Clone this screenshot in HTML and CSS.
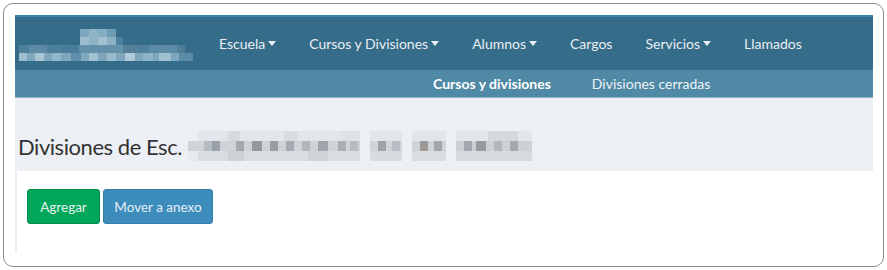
FILE: index.html
```html
<!DOCTYPE html>
<html lang="es">
<head>
<meta charset="utf-8">
<title>Divisiones</title>
<link rel="stylesheet" href="styles.css">
</head>
<body>
<div class="frame">
  <div class="page">
    <header class="topbar">
      <div class="logo">
        <svg width="178" height="36" viewBox="0 0 178 36" aria-hidden="true">
          <g>
            <rect x="61" y="3" width="9" height="8" fill="#7ea6bc"/>
            <rect x="70" y="3" width="9" height="8" fill="#8eb3c7"/>
            <rect x="79" y="3" width="9" height="8" fill="#86adc2"/>
            <rect x="88" y="3" width="9" height="8" fill="#6f9bb4"/>
            <rect x="61" y="11" width="9" height="8" fill="#9dbdce"/>
            <rect x="70" y="11" width="9" height="8" fill="#8fb3c6"/>
            <rect x="79" y="11" width="9" height="8" fill="#a3c1d1"/>
            <rect x="88" y="11" width="9" height="8" fill="#8cb1c5"/>
            <rect x="97" y="11" width="7" height="8" fill="#4c7f9b"/>
          </g>
          <g>
            <rect x="0" y="19" width="166" height="8" fill="#4d7f9b"/>
            <rect x="10" y="19" width="18" height="8" fill="#5a8aa4"/>
            <rect x="42" y="19" width="18" height="8" fill="#4a7d99"/>
            <rect x="60" y="19" width="44" height="8" fill="#6391aa"/>
            <rect x="104" y="19" width="16" height="8" fill="#547f99"/>
            <rect x="130" y="19" width="28" height="8" fill="#5b8ba5"/>
          </g>
          <g>
            <rect x="0" y="27" width="174" height="8" fill="#7ea7be"/>
            <rect x="0" y="27" width="8" height="8" fill="#9ebed0"/>
            <rect x="16" y="27" width="9" height="8" fill="#a9c6d5"/>
            <rect x="33" y="27" width="9" height="8" fill="#92b6c9"/>
            <rect x="52" y="27" width="10" height="8" fill="#5f8ea8"/>
            <rect x="70" y="27" width="9" height="8" fill="#a4c2d2"/>
            <rect x="88" y="27" width="9" height="8" fill="#9abccd"/>
            <rect x="106" y="27" width="10" height="8" fill="#aecad8"/>
            <rect x="124" y="27" width="10" height="8" fill="#8fb4c7"/>
            <rect x="140" y="27" width="12" height="8" fill="#a0c0d0"/>
            <rect x="160" y="27" width="14" height="8" fill="#5a8ca6"/>
          </g>
        </svg>
      </div>
      <nav class="mainnav">
        <a class="navlink">Escuela<span class="caret"></span></a>
        <a class="navlink">Cursos y Divisiones<span class="caret"></span></a>
        <a class="navlink">Alumnos<span class="caret"></span></a>
        <a class="navlink">Cargos</a>
        <a class="navlink">Servicios<span class="caret"></span></a>
        <a class="navlink">Llamados</a>
      </nav>
    </header>
    <div class="subnav">
      <a class="sublink active">Cursos y divisiones</a>
      <a class="sublink">Divisiones cerradas</a>
    </div>
    <section class="content">
      <h1 class="title">Divisiones de Esc.<svg class="blur" width="344" height="30" viewBox="0 0 344 30" aria-hidden="true">
          <rect x="0" y="0" width="172" height="30" fill="#e2e5e9"/>
          <rect x="182" y="0" width="32" height="30" fill="#e2e5e9"/>
          <rect x="224" y="0" width="34" height="30" fill="#e2e5e9"/>
          <rect x="268" y="0" width="76" height="30" fill="#e2e5e9"/>
          <rect x="0" y="0" width="10" height="10" fill="#ecf0f5"/>
          <rect x="40" y="0" width="12" height="10" fill="#d7dade"/>
          <rect x="96" y="0" width="14" height="10" fill="#d9dce0"/>
          <rect x="152" y="0" width="20" height="10" fill="#dfe2e6"/>
          <rect x="300" y="0" width="30" height="10" fill="#d5d8dc"/>
          <rect x="0" y="10" width="172" height="10" fill="#cfd3d8"/>
          <rect x="182" y="10" width="32" height="10" fill="#d0d4d9"/>
          <rect x="224" y="10" width="34" height="10" fill="#cfd3d8"/>
          <rect x="268" y="10" width="76" height="10" fill="#cdd1d6"/>
          <rect x="16" y="10" width="8" height="10" fill="#b6bbc2"/>
          <rect x="24" y="10" width="8" height="10" fill="#98a0aa"/>
          <rect x="48" y="10" width="8" height="10" fill="#a5a9af"/>
          <rect x="64" y="10" width="10" height="10" fill="#94989e"/>
          <rect x="82" y="10" width="8" height="10" fill="#9a9ea4"/>
          <rect x="98" y="10" width="8" height="10" fill="#a6abb3"/>
          <rect x="114" y="10" width="8" height="10" fill="#b2b7be"/>
          <rect x="130" y="10" width="10" height="10" fill="#a0a5ac"/>
          <rect x="150" y="10" width="8" height="10" fill="#aaaeb4"/>
          <rect x="162" y="10" width="8" height="10" fill="#b8bcc2"/>
          <rect x="190" y="10" width="8" height="10" fill="#9fa3a9"/>
          <rect x="204" y="10" width="8" height="10" fill="#b9bdc3"/>
          <rect x="232" y="10" width="8" height="10" fill="#9c9896"/>
          <rect x="246" y="10" width="8" height="10" fill="#a3a7ad"/>
          <rect x="276" y="10" width="8" height="10" fill="#a3a7ad"/>
          <rect x="288" y="10" width="10" height="10" fill="#979ba1"/>
          <rect x="306" y="10" width="8" height="10" fill="#b3b7bd"/>
          <rect x="322" y="10" width="8" height="10" fill="#a6aab0"/>
          <rect x="0" y="20" width="172" height="10" fill="#d9dce1"/>
          <rect x="182" y="20" width="32" height="10" fill="#d8dbe0"/>
          <rect x="224" y="20" width="34" height="10" fill="#d9dce1"/>
          <rect x="268" y="20" width="76" height="10" fill="#d7dade"/>
          <rect x="0" y="20" width="10" height="10" fill="#e6e9ed"/>
          <rect x="40" y="20" width="16" height="10" fill="#cdd1d6"/>
          <rect x="120" y="20" width="20" height="10" fill="#cfd3d8"/>
        </svg></h1>
      <div class="box">
        <button class="btn btn-success">Agregar</button>
        <button class="btn btn-primary">Mover a anexo</button>
      </div>
    </section>
  </div>
</div>
</body>
</html>
```

FILE: styles.css
```css
* { box-sizing: border-box; }

html, body {
  margin: 0;
  padding: 0;
  background: #ffffff;
}

body {
  font-family: "Lato", "Noto Sans", sans-serif;
}

.frame {
  margin: 3px;
  width: 881px;
  height: 264px;
  border: 1px solid #8c8c8c;
  border-radius: 10px;
  padding: 11px 10px 12px 11px;
}

.page {
  background: #ecf0f5;
  height: 238px;
  overflow: hidden;
}

.topbar {
  height: 55px;
  background: #356c89;
  border-top: 2px solid #3d85ad;
  display: flex;
  align-items: center;
}

.logo {
  width: 190px;
  padding-left: 4px;
  display: flex;
  align-items: center;
  margin-top: 1px;
}

.logo svg { display: block; }

.mainnav {
  display: flex;
  align-items: center;
}

.navlink {
  color: #e9eff3;
  font-size: 14px;
  padding: 0 16.5px;
  display: flex;
  align-items: center;
  white-space: nowrap;
}

.navlink:first-child { padding-left: 14px; }

.caret {
  display: inline-block;
  width: 0;
  height: 0;
  margin-left: 3px;
  border-top: 5px solid #e9eff3;
  border-left: 4.5px solid transparent;
  border-right: 4.5px solid transparent;
}

.subnav {
  height: 28px;
  background: #4f89a6;
  border-bottom: 1px solid #8db6cb;
  display: flex;
  align-items: center;
  padding-left: 418px;
}

.sublink {
  color: #eef4f7;
  font-size: 14px;
  margin-right: 41px;
  white-space: nowrap;
}

.sublink.active { font-weight: 700; color: #ffffff; }

.title {
  margin: 33px 0 10px 3px;
  font-size: 22px;
  letter-spacing: -0.45px;
  font-weight: 400;
  color: #333333;
  display: flex;
  align-items: center;
  height: 30px;
  white-space: nowrap;
}

.title .blur { display: block; margin-left: 6px; }

.box {
  margin-left: 2px;
  background: #ffffff;
  height: 90px;
  padding: 18px 10px;
  display: flex;
  gap: 3px;
  align-items: flex-start;
}

.btn {
  font-family: "Lato", "Noto Sans", sans-serif;
  font-size: 13.5px;
  height: 35px;
  border-radius: 3px;
  border: 1px solid transparent;
  color: #e8f3ee;
  padding: 0;
  white-space: nowrap;
  text-align: center;
}

.btn-success {
  background: #00a65a;
  border-color: #008d4c;
  width: 73px;
}

.btn-primary {
  background: #3c8dbc;
  border-color: #367fa9;
  color: #e4eef5;
  width: 110px;
}
```
